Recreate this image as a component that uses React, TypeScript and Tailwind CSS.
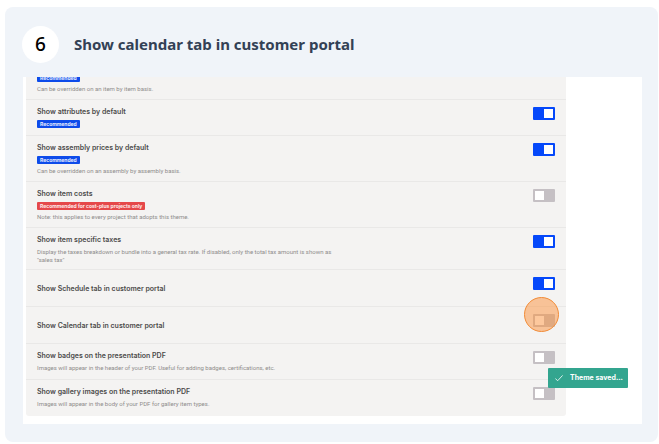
import { useState } from "react";
import { clsx } from "clsx";

type Setting = {
  id: string;
  title?: string;
  tag?: string;
  tagTone?: "blue" | "red";
  note?: string;
  on?: boolean;
  highlighted?: boolean;
};

const SETTINGS: Setting[] = [
  { id: "item", tag: "Recommended", note: "Can be overridden on an item by item basis." },
  { id: "attributes", title: "Show attributes by default", tag: "Recommended", on: true },
  {
    id: "assembly",
    title: "Show assembly prices by default",
    tag: "Recommended",
    note: "Can be overridden on an assembly by assembly basis.",
    on: true,
  },
  {
    id: "costs",
    title: "Show item costs",
    tag: "Recommended for cost-plus projects only",
    tagTone: "red",
    note: "Note: this applies to every project that adopts this theme.",
  },
  {
    id: "taxes",
    title: "Show item specific taxes",
    note: 'Display the taxes breakdown or bundle into a general tax rate. If disabled, only the total tax amount is shown as "sales tax"',
    on: true,
  },
  { id: "schedule", title: "Show Schedule tab in customer portal", on: true },
  { id: "calendar", title: "Show Calendar tab in customer portal", highlighted: true },
  {
    id: "badges",
    title: "Show badges on the presentation PDF",
    note: "Images will appear in the header of your PDF. Useful for adding badges, certifications, etc.",
  },
  {
    id: "gallery",
    title: "Show gallery images on the presentation PDF",
    note: "Images will appear in the body of your PDF for gallery item types.",
  },
];

function Toggle({ id, on, highlighted }: { id: string; on?: boolean; highlighted?: boolean }) {
  const [checked, setChecked] = useState(Boolean(on));

  return (
    <div className="relative mt-px shrink-0 self-start">
      <input
        id={id}
        type="checkbox"
        checked={checked}
        onChange={(e) => setChecked(e.target.checked)}
        className="flex h-[13px] w-[22px] cursor-pointer appearance-none items-center rounded-[1px] bg-[#c5c0c4] px-[2px] before:h-[9px] before:w-[9px] before:bg-white before:content-[''] checked:justify-end checked:bg-[#0548fa]"
      />
      {/* Click marker */}
      {highlighted && (
        <span className="pointer-events-none absolute -top-[17px] -left-[9px] h-[35px] w-[35px] rounded-full border border-[#f28c38] bg-[#fb923c]/50" />
      )}
    </div>
  );
}

function SettingRow({ setting }: { setting: Setting }) {
  const { id, title, tag, tagTone, note, on, highlighted } = setting;
  const titleOnly = !tag && !note;

  return (
    <li
      className={clsx(
        "flex justify-between border-b border-[#e9e8e7] px-[11px] pt-1.5 pb-[5px] last:border-b-0",
        titleOnly ? "min-h-[37px] items-center" : "min-h-[36px]",
        !title && "items-end"
      )}
    >
      <div className="flex max-w-[304px] flex-col items-start">
        {title && (
          <label htmlFor={id} className="text-[7px] leading-[12px] font-semibold text-[#4c4b4b]">
            {title}
          </label>
        )}
        {tag && (
          <span
            className={clsx(
              "my-0.5 rounded-[1px] px-[3px] text-[5px] leading-[8px] font-bold text-white/90",
              tagTone === "red" ? "bg-[#e5484a]" : "bg-[#0d4bea]"
            )}
          >
            {tag}
          </span>
        )}
        {note && (
          <p
            className={clsx(
              "font-['Roboto',sans-serif] text-[6px] leading-[8px] text-[#8f8d8c]",
              tag ? "my-px" : "mt-0.5"
            )}
          >
            {note}
          </p>
        )}
      </div>
      {title && <Toggle id={id} on={on} highlighted={highlighted} />}
    </li>
  );
}

export default function App() {
  return (
    <div className="min-h-screen bg-white pt-[7px] pr-px pb-[3px] pl-[5px]">
      <section className="rounded-lg bg-[#f0f4f9] pr-4 pb-[18px] pl-[18px]">
        <header className="flex h-[70px] items-center gap-[15px] pt-[5px] font-['Noto_Sans',sans-serif]">
          <span className="-ml-px flex h-[37px] w-[37px] items-center justify-center rounded-full bg-white text-[19px] font-medium text-black">
            6
          </span>
          <h1 className="text-[15px] font-bold text-[#334155]">Show calendar tab in customer portal</h1>
        </header>

        <div className="relative overflow-hidden bg-white pr-[76px] pb-2 pl-[3px] font-['Inter',sans-serif]">
          <ul className="-mt-[13px] rounded-b-[3px] bg-[#f4f3f2]">
            {SETTINGS.map((setting) => (
              <SettingRow key={setting.id} setting={setting} />
            ))}
          </ul>

          {/* Toast */}
          <div
            role="status"
            className="absolute right-[14px] bottom-9 flex h-5 w-20 items-center gap-[7px] rounded-[1px] bg-[#33a58f] pl-[7px] text-[7px] font-bold text-white"
          >
            <svg viewBox="0 0 8 8" className="h-2 w-2" fill="none" stroke="currentColor" strokeWidth="0.8">
              <path d="M0.4 4.6 L2.7 6.7 L7.6 1.4" />
            </svg>
            Theme saved...
          </div>
        </div>
      </section>
    </div>
  );
}
